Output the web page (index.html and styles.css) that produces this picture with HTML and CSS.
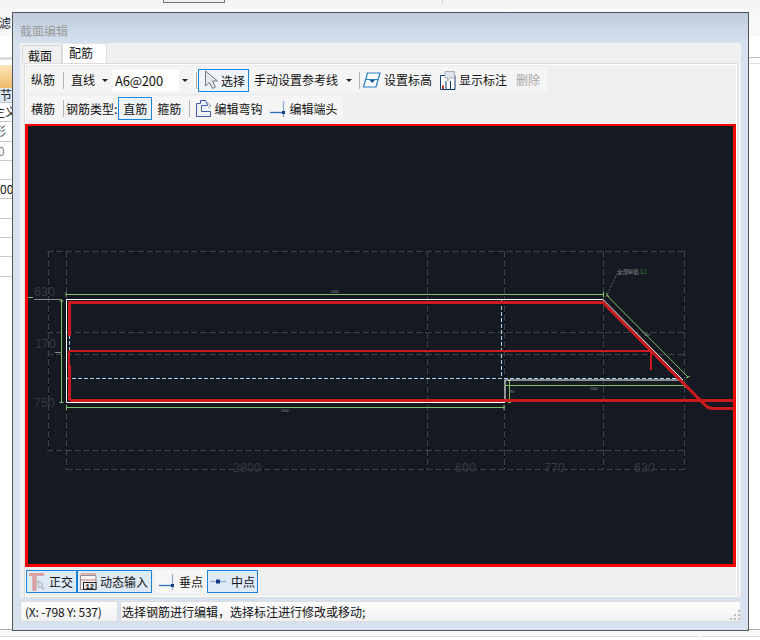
FILE: index.html
```html
<!DOCTYPE html>
<html lang="zh">
<head>
<meta charset="utf-8">
<title>截面编辑</title>
<link rel="stylesheet" href="styles.css">
</head>
<body>
<div class="app">
  <div class="top-strip"><span class="top-btn"></span><span class="top-tick"></span></div>
  <div class="filter-strip"><span class="filter-text">滤</span></div>
  <div class="rule-band"></div>
  <div class="side-table">
    <div class="side-head"></div>
    <div class="side-row side-sel">节</div>
    <div class="side-row side-main">主义</div>
    <div class="side-row side-shape">形</div>
    <div class="side-row side-num">0</div>
    <div class="side-row"></div>
    <div class="side-row side-dark">00</div>
    <div class="side-row"></div>
    <div class="side-row"></div>
    <div class="side-row"></div>
    <div class="side-row"></div>
  </div>
  <div class="bottom-lines"></div>

  <section class="window">
    <div class="title">截面编辑</div>
    <div class="tabs-box">
      <div class="tabs">
        <span class="tab">截面</span>
        <span class="tab tab-on">配筋</span>
      </div>
      <div class="pane">
        <div class="bar bar-one">
          <span class="lbl">纵筋</span>
          <i class="sep"></i>
          <span class="lbl">直线</span>
          <i class="caret caret-line"></i>
          <span class="combo"><span class="combo-val">A6@200</span><span class="combo-arrow"><i class="caret"></i></span></span>
          <i class="sep sep-combo"></i>
          <span class="btn btn-select">
            <svg class="ico" width="14" height="20" viewBox="0 0 14 20"><path d="M1.500 1v15l4-3.500 3 6 3-1.500-3-6h5z" fill="#e4e6ea" stroke="#74787f"/></svg>
            选择
          </span>
          <span class="lbl lbl-manual">手动设置参考线</span>
          <i class="caret caret-manual"></i>
          <i class="sep sep-manual"></i>
          <svg class="ico ico-level" width="18" height="16" viewBox="0 0 18 16"><path d="M4.500 1h12.500l-4 14H.5z" fill="#fff" stroke="#1f7fc4" stroke-width="1.200"/><path d="M3 7.500h12" stroke="#1f7fc4"/><path d="M6.500 8h5.500l-2.700 3z" fill="#134f8f"/></svg>
          <span class="lbl">设置标高</span>
          <svg class="ico ico-show" width="16" height="19" viewBox="0 0 16 19"><path d="M.5 4.500h14.500v14H.5z" fill="#fff" stroke="#123f73"/><path d="M6 10v8.500M10.500 10v8.500" stroke="#123f73"/><path d="M2 14.500h2v3.500H2z" fill="#d5391f"/><path d="M5 .5h9.500v6.500H10l-2.500 3V7H5z" fill="#dfe3ea" stroke="#a9b0bc"/></svg>
          <span class="lbl">显示标注</span>
          <span class="lbl lbl-off">删除</span>
        </div>
        <div class="bar bar-two">
          <span class="lbl">横筋</span>
          <i class="sep"></i>
          <span class="lbl lbl-type">钢筋类型:</span>
          <span class="btn btn-straight">直筋</span>
          <span class="lbl lbl-stir">箍筋</span>
          <i class="sep sep-stir"></i>
          <svg class="ico ico-hook" width="16" height="17" viewBox="0 0 16 17"><path d="M.5 3.500h4v-3h5l2 4v1h-6v6h9v5H.5z" fill="#eef1fb" stroke="#3d5aa8"/><path d="M11 2.500l4 3.500-3 2" fill="none" stroke="#8a9ad0"/></svg>
          <span class="lbl">编辑弯钩</span>
          <svg class="ico ico-end" width="18" height="18" viewBox="0 0 18 18"><path d="M0 12.500h14" stroke="#2a6fb8" stroke-width="1.300"/><path d="M13.500 1v16" stroke="#8eaed3" stroke-width="1.300"/><rect x="12" y="11" width="3" height="3" fill="#123c86"/></svg>
          <span class="lbl">编辑端头</span>
        </div>

        <div class="canvas">
          <svg class="drawing" width="705" height="438" viewBox="28 126 705 438">
            <g class="dash-base">
              <path d="M47 251.500H684M47 332.500H684M47 354.500H684M47 450.500H684M66 469.500H685M48.500 251V450M66.500 251V470M427.500 251V470M504.500 251V470M603.500 251V470M684.500 251V470"/>
            </g>
            <g class="dash-top">
              <path d="M47 251.500H684M47 332.500H684M47 354.500H684M47 450.500H684M66 469.500H685M48.500 251V450M66.500 251V470M427.500 251V470M504.500 251V470M603.500 251V470M684.500 251V470"/>
            </g>
            <g class="dim-text">
              <text x="34" y="296">630</text>
              <text x="35" y="348">170</text>
              <text x="34" y="407">750</text>
              <text x="233" y="472">2800</text>
              <text x="455" y="472">600</text>
              <text x="544" y="472">770</text>
              <text x="634" y="472">630</text>
            </g>
            <g class="leader">
              <path d="M606 297L617 274L621 272"/>
            </g>
            <text class="tiny tiny-gray" x="617" y="274">全部纵筋</text>
            <text class="tiny tiny-green" x="640" y="274">1J</text>
            <text class="micro" x="331" y="293">2400</text>
            <text class="micro" x="281" y="412">2400</text>
            <text class="micro" x="590" y="390">1400</text>
            <text class="micro" x="510" y="393">90</text>
            <text class="micro" x="644" y="336">300</text>
            <g class="green">
              <path d="M66 294.500H603M61.500 300V403M66 407.500H505M505 385.500H685M509.500 380V403M606.500 295L688 377"/>
              <path d="M28 297.500H33"/>
              <path d="M66 292.500V296.500M603.500 292V297M59.500 301H63.500M59.500 402.500H63.500M66.500 405V410M504 405V410M508 380.500H511M508 402.500H511M685 383V388M606 293L609 297M686 378L690 376"/>
            </g>
            <path class="gray-line" d="M34 299.500H62"/>
            <path class="gray-line" d="M55 352.500H62"/>
            <g class="white-line">
              <path d="M66.500 299.500H603L683 380H505V402.500H66.500V299.500"/>
            </g>
            <g class="blue-dash">
              <path d="M66 378.500H683M501.500 300V378M69.500 335V351"/>
            </g>
            <g class="red">
              <path class="red-thick" d="M69.500 336V302.500H603L703 403L708 407.500L713 408.500H736"/>
              <path class="red-thick" d="M69.500 400.500H735"/>
              <path class="red-thick" d="M69.500 400V365"/>
              <path class="red-mid" d="M69 351H651M651 351V370M69 351V366"/>
            </g>
          </svg>
        </div>

        <div class="bar-low">
          <span class="btn btn-low btn-ortho">
            <svg class="ico" width="19" height="18" viewBox="0 0 19 18"><path d="M0 1.500h15" stroke="#d9a3a3" stroke-width="3"/><path d="M5.500 1.500V18" stroke="#d9a3a3" stroke-width="4.500"/><path d="M9 8l1 7 1.500-1.500 2.500 3 1-1-2.500-3 1.500-1.500z" fill="#e8eaee" stroke="#8a8f96" stroke-width=".7"/></svg>
            正交
          </span>
          <span class="btn btn-low btn-input">
            <svg class="ico" width="17" height="17" viewBox="0 0 17 17"><path d="M.5 2.500h15.500v14H.5z" fill="#f4f4f4" stroke="#9a8d8d"/><path d="M1 1h15M1 7h15" stroke="#c87f7f"/><rect x="3.500" y="9.500" width="12.500" height="7" fill="#ececec" stroke="#222"/><text class="mini-num" x="5.500" y="15.500">12</text></svg>
            动态输入
          </span>
          <span class="btn btn-low btn-plain">
            <svg class="ico" width="17" height="17" viewBox="0 0 17 17"><path d="M0 12.500h14" stroke="#2a6fb8" stroke-width="1.300"/><path d="M13.500 1v16" stroke="#8eaed3" stroke-width="1.300"/><rect x="12" y="11" width="3" height="3" fill="#123c86"/></svg>
            垂点
          </span>
          <span class="btn btn-low btn-mid">
            <svg class="ico" width="17" height="9" viewBox="0 0 17 9"><path d="M0 4.500h16" stroke="#8eaed3" stroke-width="1.300"/><rect x="6" y="2.500" width="4" height="4" fill="#123c86"/></svg>
            中点
          </span>
        </div>
      </div>
    </div>
    <div class="status">
      <span class="st-cell st-pos">(X: -798 Y: 537)</span>
      <span class="st-cell st-msg">选择钢筋进行编辑，选择标注进行修改或移动;</span>
      <svg class="grip" width="11" height="11" viewBox="0 0 11 11"><path d="M9 0h2v2H9zM5 4h2v2H5zM9 4h2v2H9zM1 8h2v2H1zM5 8h2v2H5zM9 8h2v2H9z" fill="#bbb"/></svg>
    </div>
  </section>
</div>
</body>
</html>
```
FILE: styles.css
```css
* { box-sizing: border-box; }
html, body { margin: 0; padding: 0; }
body {
  width: 760px;
  height: 640px;
  overflow: hidden;
  background: #fff;
  font-family: "Noto Sans CJK SC", "Liberation Sans", sans-serif;
  font-size: 12px;
  color: #111;
}
.app { position: relative; width: 760px; height: 640px; overflow: hidden; }

.top-strip { height: 9px; background: #f5f5f5; position: relative; }
.top-btn {
  position: absolute; left: 163px; top: -2px; width: 62px; height: 5px;
  border: 1px solid #777; background: #f2f2f2;
}
.top-tick { position: absolute; left: 442px; top: 0; width: 1px; height: 4px; background: #ccc; }
.filter-strip {
  height: 27px; background: #f8f8f8; padding-top: 5px; line-height: 18px;
  font-size: 12px; overflow: hidden; color: #123;
}
.filter-text { margin-left: -1px; }
.rule-band { height: 21px; background: #fff; }
.rule-band::after {
  content: ""; position: absolute; left: 749px; right: 0; top: 57px; height: 5px;
  border-top: 1px solid #bbb; border-bottom: 1px solid #ddd;
}
.side-table { width: 12px; overflow: hidden; border-top: 3px solid #ddd; padding-top: 5px; }
.side-head { height: 23px; background: linear-gradient(#fbe6bf, #f0ba66); }
.side-row {
  height: 19.3px; border-bottom: 1px solid #c8c8c8; white-space: nowrap; line-height: 18px;
  font-size: 12px; color: #222; width: 12px; overflow: hidden;
}
.side-sel { height: 15px; background: #d9e8f5; line-height: 14px; }
.side-main { text-indent: -7px; }
.side-shape { text-indent: -6px; color: #555; }
.side-num { color: #888; text-indent: -2px; }
.side-dark { color: #111; }
.bottom-lines {
  position: absolute; left: 0; right: 0; top: 629px; height: 8px;
  background: #fafafa; border-top: 1px solid #aaa; border-bottom: 1px solid #ddd;
}
.bottom-lines::after {
  content: ""; position: absolute; left: 698px; bottom: -1px; width: 3px; height: 3px; background: #fafafa;
}

.window {
  position: absolute; left: 12px; top: 12px; width: 737px; height: 619px;
  border: 1px solid #555;
  background: linear-gradient(#bfccdb 0, #d6e2f0 31px, #d6e2f0 100%);
  display: flex; flex-direction: column;
}
.title { height: 30px; padding: 10px 0 0 7px; line-height: 16px; color: #9b9b9b; font-size: 12px; }
.tabs-box { margin-left: 7px; width: 721px; height: 555px; background: #f0f0f0; }
.tabs { height: 20px; display: flex; align-items: flex-end; padding-left: 2px; }
.tab {
  width: 40px; height: 18px; border: 1px solid #d8d8d8; border-bottom: 0; background: #f1f1f1;
  line-height: 19px; font-size: 12px; padding-left: 5px;
}
.tab-on { width: 45px; height: 20px; background: #fff; border-color: #e0e0e0; line-height: 17px; padding-left: 6px; }
.pane {
  margin-left: 4px; width: 714px; height: 535px; border: 1px solid #ddd;
  background: #efefef; box-shadow: inset 0 0 0 1px #fff; padding: 3px 0 0 2px;
  display: flex; flex-direction: column;
}
.bar { display: flex; align-items: center; background: #f5f5f5; border-radius: 2px; }
.bar-one { height: 26px; width: 520px; padding-left: 4px; }
.bar-two { height: 25px; width: 316px; padding-left: 4px; margin-top: 3px; }
.lbl { line-height: 16px; white-space: nowrap; flex: none; }
.sep { width: 1px; height: 17px; background: #b5b5b5; margin: 0 7px 0 8px; flex: none; }
.caret {
  width: 0; height: 0; border: 3px solid transparent; border-top: 3px solid #222;
  border-bottom: 0; display: block; flex: none;
}
.caret-line { margin: 0 0 0 7px; }
.combo {
  width: 77px; height: 21px; margin-left: 5px; background: #fff; display: flex; align-items: center; flex: none;
}
.combo-val { width: 66px; padding-left: 2px; font-size: 13px; letter-spacing: -.2px; }
.combo-arrow { width: 11px; height: 21px; background: #f3f3f3; display: flex; align-items: center; justify-content: center; }
.sep-combo { margin: 0 1px 0 6px; }
.btn {
  display: flex; align-items: center; flex: none; height: 23px;
  border: 1px solid transparent; white-space: nowrap;
}
.btn-select { width: 51px; background: #eef4fa; border-color: #1683dd; padding-left: 5px; gap: 3px; }
.lbl-manual { margin-left: 5px; }
.caret-manual { margin-left: 8px; }
.sep-manual { margin: 0 3px 0 7px; }
.ico { flex: none; display: block; }
.ico-show { margin: 0 3px 0 8px; }
.ico-level { margin-right: 3px; }
.lbl-off { color: #a6a6a6; margin-left: 9px; }
.lbl-type { margin: 0 1px 0 -5px; }
.btn-straight { width: 34px; background: #eef4fa; border-color: #1683dd; justify-content: center; }
.lbl-stir { margin-left: 5px; }
.sep-stir { margin: 0 6px 0 8px; }
.ico-hook { margin-right: 2px; }
.ico-end { margin: 0 1px 0 8px; }

.canvas {
  margin: 3px 0 0 -2px; width: 711px; height: 443px; flex: none;
  background: #151921; border: 3px solid #fe0000; border-width: 2px 3px 3px 3px;
  overflow: hidden;
}
.drawing { display: block; }
.dash-base path { fill: none; stroke: #000; stroke-width: 1; }
.dash-top path { fill: none; stroke: #3b4049; stroke-width: 1; stroke-dasharray: 7 2; }
.dim-text text {
  font-family: "Liberation Sans", sans-serif; font-size: 12.5px;
  fill: #343943;
}
.leader path { fill: none; stroke: #77797d; stroke-width: .8; stroke-dasharray: 2 1.500; }
.tiny { font-size: 5.500px; font-family: "Noto Sans CJK SC", sans-serif; }
.tiny-gray { fill: #8f8f8f; }
.tiny-green { fill: #2fa02f; font-size: 6px; }
.micro { font-size: 3.500px; font-family: "Liberation Sans", sans-serif; fill: #8a8f99; }
.green path { fill: none; stroke: #81c064; stroke-width: 1; }
.gray-line { fill: none; stroke: #8a8a8a; stroke-width: 1; }
.white-line path { fill: none; stroke: #fff; stroke-width: 1; }
.blue-dash path { fill: none; stroke: #a9d3f5; stroke-width: 1; stroke-dasharray: 4 2; }
.red path { fill: none; stroke: #cd1a1f; }
.red .red-thick { stroke-width: 3; }
.red .red-mid { stroke-width: 2; }

.bar-low { display: flex; align-items: center; height: 23px; margin: 3px 0 0 -1px; }
.btn-low { background: #deeaf6; border-color: #1683dd; }
.btn-ortho { width: 51px; padding-left: 2px; gap: 1px; }
.btn-input { width: 75px; padding-left: 2px; gap: 3px; }
.btn-plain { width: 52px; margin-left: 3px; background: #f6f6f6; border-color: transparent; padding-left: 3px; gap: 3px; }
.btn-mid { width: 51px; padding-left: 2px; gap: 4px; }
.mini-num { font-family: "Liberation Mono", monospace; font-size: 7px; font-weight: 700; fill: #111; }

.status {
  position: relative; display: flex; margin: 3px 0 0 7px; width: 721px; height: 21px; gap: 2px;
}
.st-cell {
  height: 21px; border: 1px solid #dcdcdc; background: linear-gradient(#fdfdfd, #f1f1f1);
  line-height: 19px; white-space: nowrap;
}
.st-pos { width: 98px; padding-left: 4px; letter-spacing: -.2px; }
.st-msg { flex: 1; padding-left: 1px; }
.grip { position: absolute; right: 1px; bottom: 1px; }
```
